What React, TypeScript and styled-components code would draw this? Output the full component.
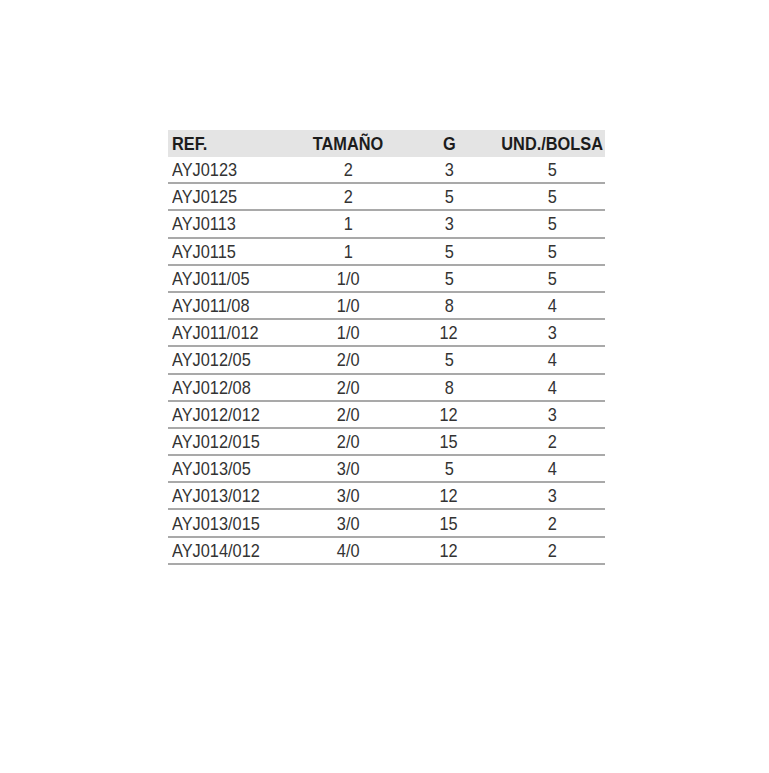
import React from 'react'
import styled, { createGlobalStyle } from 'styled-components'

const GlobalStyle = createGlobalStyle`
  html, body {
    margin: 0;
    padding: 0;
    background: #fff;
  }
  body {
    font-family: "Liberation Sans", Arial, sans-serif;
  }
`

const Page = styled.div`
  width: 769px;
  height: 773px;
  padding: 130px 0 0 168px;
  box-sizing: border-box;
`

const Table = styled.table`
  width: 437px;
  table-layout: fixed;
  border-collapse: collapse;
  color: #333;
  font-size: 19px;
`

const HeadCell = styled.th`
  background: #e4e4e4;
  height: 27px;
  padding: 0 4px;
  font-weight: bold;
  color: #1c1c1c;
`

const Row = styled.tr`
  border-bottom: 2px solid #a9a9a9;
`

const Cell = styled.td`
  height: 25.2px;
  padding: 0 4px;
  line-height: 25px;
`

// keeps the squeezed text centred even when its unscaled box is wider than the cell
const Align = styled.div<{ $left?: boolean }>`
  display: flex;
  justify-content: ${(p) => (p.$left ? 'flex-start' : 'center')};
`

// condensed face stand-in: squeeze a regular sans horizontally
const Narrow = styled.span<{ $left?: boolean }>`
  display: inline-block;
  flex-shrink: 0;
  transform: scaleX(0.86);
  transform-origin: ${(p) => (p.$left ? 'left' : 'center')};
  white-space: nowrap;
`

const rows = [
  ['AYJ0123', '2', '3', '5'],
  ['AYJ0125', '2', '5', '5'],
  ['AYJ0113', '1', '3', '5'],
  ['AYJ0115', '1', '5', '5'],
  ['AYJ011/05', '1/0', '5', '5'],
  ['AYJ011/08', '1/0', '8', '4'],
  ['AYJ011/012', '1/0', '12', '3'],
  ['AYJ012/05', '2/0', '5', '4'],
  ['AYJ012/08', '2/0', '8', '4'],
  ['AYJ012/012', '2/0', '12', '3'],
  ['AYJ012/015', '2/0', '15', '2'],
  ['AYJ013/05', '3/0', '5', '4'],
  ['AYJ013/012', '3/0', '12', '3'],
  ['AYJ013/015', '3/0', '15', '2'],
  ['AYJ014/012', '4/0', '12', '2'],
]

const heads = ['REF.', 'TAMAÑO', 'G', 'UND./BOLSA']

export default function App() {
  return (
    <>
      <GlobalStyle />
      <Page>
        <Table>
          <colgroup>
            <col style={{ width: 130 }} />
            <col style={{ width: 100 }} />
            <col style={{ width: 102 }} />
            <col style={{ width: 105 }} />
          </colgroup>
          <thead>
            <tr>
              {heads.map((h, i) => (
                <HeadCell key={h}>
                  <Align $left={i === 0}>
                    <Narrow $left={i === 0}>{h}</Narrow>
                  </Align>
                </HeadCell>
              ))}
            </tr>
          </thead>
          <tbody>
            {rows.map((r) => (
              <Row key={r[0]}>
                {r.map((v, i) => (
                  <Cell key={i}>
                    <Align $left={i === 0}>
                      <Narrow $left={i === 0}>{v}</Narrow>
                    </Align>
                  </Cell>
                ))}
              </Row>
            ))}
          </tbody>
        </Table>
      </Page>
    </>
  )
}
